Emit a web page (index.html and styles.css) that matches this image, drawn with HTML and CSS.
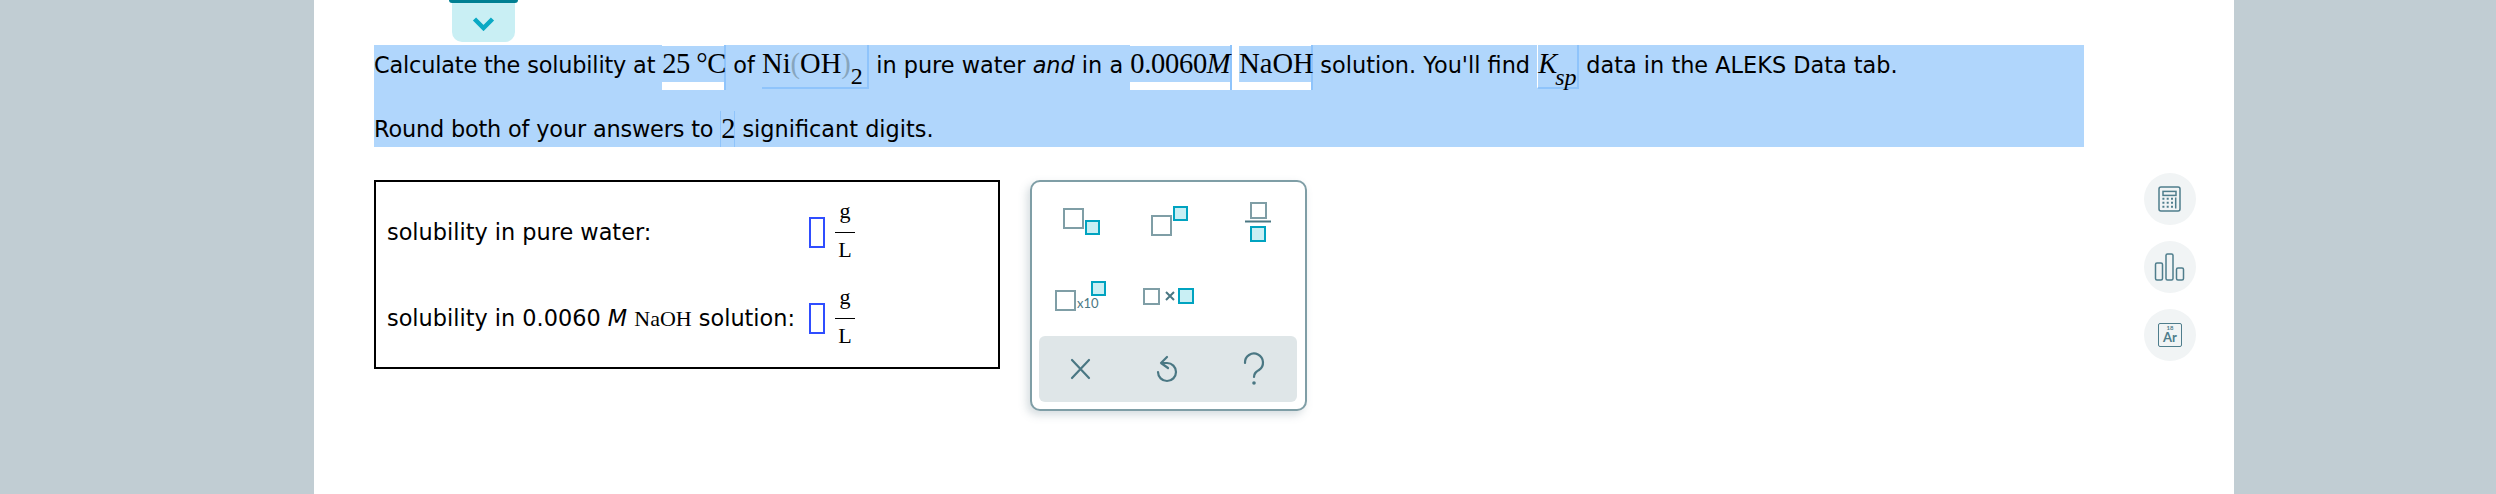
FILE: index.html
```html
<!DOCTYPE html>
<html lang="en">
<head>
  <meta charset="UTF-8">
  <title>Solubility question</title>
  <link rel="stylesheet" href="styles.css">
</head>
<body>
  <div class="side side-left"></div>

  <div class="main">
    <div class="content">
      <div class="tab-wrap">
        <div class="tab-bar"></div>
        <div class="tab">
          <svg width="23" height="14" viewBox="0 0 23 14"><path d="M2.500 2l9 9 9-9" fill="none" stroke="#0aa9c4" stroke-width="4.500"/></svg>
        </div>
      </div>

      <div class="question">
        <div class="q-line q-line-1">
          <span class="txt tight">Calculate the solubility at </span>
          <span class="tok tok-white tok-temp">25 °C</span>
          <span class="txt"> of </span>
          <span class="tok tok-hl tok-ni">Ni<span class="paren">(</span>OH<span class="paren">)</span><sub>2</sub></span>
          <span class="txt"> in pure water <em>and</em> in a </span>
          <span class="tok tok-white tok-conc">0.0060<i>M</i></span>
          <span class="tok-gap"></span>
          <span class="tok tok-white tok-naoh">NaOH</span>
          <span class="txt"> solution. You'll find </span>
          <span class="tok tok-hl tok-ksp"><i>K</i><sub><i>sp</i></sub></span>
          <span class="txt"> data in the ALEKS Data tab.</span>
        </div>
        <div class="q-line q-line-2">
          <span class="txt tight">Round both of your answers to </span>
          <span class="tok tok-two">2</span>
          <span class="txt"> significant digits.</span>
        </div>
      </div>

      <div class="work">
        <div class="answer-box">
          <div class="answer-row">
            <span class="answer-label">solubility in pure water:</span>
            <span class="input"></span>
            <span class="frac"><span class="num">g</span><span class="den">L</span></span>
          </div>
          <div class="answer-row">
            <span class="answer-label">solubility in 0.0060 <i>M</i> <span class="serif">NaOH</span> solution:</span>
            <span class="input"></span>
            <span class="frac"><span class="num">g</span><span class="den">L</span></span>
          </div>
        </div>

        <div class="palette">
          <div class="palette-grid">
            <svg width="86" height="74" viewBox="0 0 86 74" class="ic">
              <rect class="g" x="25" y="25" width="19" height="19"/><rect class="t" x="47" y="37" width="13" height="13"/>
            </svg>
            <svg width="86" height="74" viewBox="0 0 86 74" class="ic">
              <rect class="g" x="27" y="32" width="19" height="19"/><rect class="t" x="49" y="23" width="13" height="13"/>
            </svg>
            <svg width="86" height="74" viewBox="0 0 86 74" class="ic">
              <rect class="g" x="40" y="19" width="15" height="15"/><path class="ln" d="M34 37.500h26"/><rect class="t" x="40" y="43" width="14" height="14"/>
            </svg>
            <svg width="86" height="74" viewBox="0 0 86 74" class="ic">
              <rect class="g" x="17" y="33" width="19" height="19"/><text class="x10" x="38" y="50">x10</text><rect class="t" x="53" y="24" width="13" height="13"/>
            </svg>
            <svg width="86" height="74" viewBox="0 0 86 74" class="ic">
              <rect class="g" x="19" y="31" width="15" height="15"/><path class="ln2" d="M41 34l8 8M49 34l-8 8"/><rect class="t" x="54" y="31" width="14" height="14"/>
            </svg>
          </div>
          <div class="palette-bar">
            <svg width="86" height="66" viewBox="0 0 86 66"><path class="act" d="M33 24l17 18M50 24L33 42"/></svg>
            <svg width="86" height="66" viewBox="0 0 86 66"><path class="act" d="M42 21l-6 6 7 5M36 27h6a9 9 0 1 1-9 9"/></svg>
            <svg width="86" height="66" viewBox="0 0 86 66"><path class="act" d="M34 27a9 9 0 1 1 14 7c-3 2-5 3-5 7"/><circle cx="43" cy="47" r="1.800" fill="#4a7783"/></svg>
          </div>
        </div>
      </div>
    </div>

    <div class="tools">
      <div class="tool">
        <svg width="26" height="28" viewBox="0 0 26 28">
          <rect class="tl" x="2" y="2" width="21" height="24" rx="2"/>
          <rect class="tl" x="6" y="6.400" width="13" height="4"/>
          <path class="dots" d="M5.400 13.700h11M5.400 17.700h11M5.400 21.700h11"/>
          <path class="tl" d="M18.700 12.500v11"/>
        </svg>
      </div>
      <div class="tool">
        <svg width="32" height="30" viewBox="0 0 32 30">
          <rect class="tl" x="1.500" y="11" width="7" height="17" rx="1.500"/>
          <rect class="tl" x="12" y="2" width="7" height="26" rx="1.500"/>
          <rect class="tl" x="22.500" y="16" width="7" height="12" rx="1.500"/>
        </svg>
      </div>
      <div class="tool">
        <div class="element"><span class="el-num">18</span><span class="el-sym">Ar</span></div>
      </div>
    </div>
  </div>

  <div class="side side-right"></div>
</body>
</html>
```

FILE: styles.css
```css
html, body {
  margin: 0;
  height: 100%;
}

body {
  display: flex;
  height: 494px;
  overflow: hidden;
  background-color: #ffffff;
  color: #000000;
  font-family: "DejaVu Sans", sans-serif;
  font-size: 22.400px;
}

.side {
  background-color: #c1cdd3;
}

.side-left {
  width: 314px;
}

.side-right {
  width: 262px;
}

.main {
  width: 1920px;
  display: flex;
  padding-left: 60px;
  box-sizing: border-box;
}

.content {
  width: 1710px;
}

/* tab at the top */
.tab-wrap {
  width: 69px;
  margin-left: 75px;
}

.tab-bar {
  height: 3px;
  background-color: #007f92;
  border-radius: 0 0 3px 3px;
}

.tab {
  height: 39px;
  margin: 0 3px;
  background-color: #c9eff4;
  border-radius: 0 0 10px 10px;
  display: flex;
  justify-content: center;
  padding-top: 14px;
  box-sizing: border-box;
}

/* question text */
.question {
  margin-top: 3px;
  height: 102px;
  background-color: #b0d6fc;
}

.q-line {
  display: flex;
  align-items: flex-start;
  white-space: pre;
}

.q-line-1 {
  height: 66px;
}

.q-line-1 .txt {
  line-height: 40px;
}

.q-line-2 .txt {
  line-height: 36px;
}

.tight {
  letter-spacing: -0.17px;
}

.tok {
  font-family: "Liberation Serif", serif;
  font-size: 28.500px;
  line-height: 37px;
  box-sizing: border-box;
}

.tok-white {
  height: 45px;
  background: linear-gradient(#ffffff 1px, #b0d6fc 1px, #b0d6fc 37px, #ffffff 37px);
  border-right: 2px solid #8fc4fb;
}

.tok-gap {
  width: 7px;
  height: 45px;
  background-color: #ffffff;
}

.tok-hl {
  height: 44px;
  border-right: 2px solid #8fc4fb;
  border-bottom: 2px solid #8fc4fb;
}

.tok-temp {
  width: 64px;
  letter-spacing: -0.5px;
}

.tok-ni {
  width: 107px;
}

.tok-conc {
  width: 102px;
  letter-spacing: -0.3px;
}

.tok-naoh {
  width: 74px;
}

.tok-ksp {
  width: 42px;
  border-left: 1px solid #ffffff;
}

.tok sub {
  font-size: 24px;
  line-height: 0;
  vertical-align: -11px;
}

.tok-ksp sub {
  vertical-align: -12px;
  margin-left: -2px;
}

.paren {
  color: #87a5bd;
}

.tok-two {
  width: 15px;
  height: 36px;
  line-height: 36px;
  text-align: center;
  border-left: 1px solid #8fc4fb;
  border-right: 1px solid #8fc4fb;
}

/* answer box and palette */
.work {
  display: flex;
  align-items: flex-start;
  margin-top: 33px;
}

.answer-box {
  width: 626px;
  height: 189px;
  border: 2px solid #000000;
  box-sizing: border-box;
  padding: 0 11px;
}

.answer-row {
  height: 86px;
  display: flex;
  align-items: center;
}

.answer-row:first-child {
  margin-top: 7px;
}

.answer-label {
  width: 422px;
  white-space: nowrap;
}

.serif {
  font-family: "Liberation Serif", serif;
  font-size: 22px;
}

.input {
  width: 16px;
  height: 31px;
  border: 2px solid #2f4dff;
  box-sizing: border-box;
}

.frac {
  display: flex;
  flex-direction: column;
  align-items: center;
  width: 20px;
  margin-left: 10px;
  margin-top: -4px;
  font-family: "Liberation Serif", serif;
  font-size: 22px;
  line-height: 28px;
}

.num {
  width: 100%;
  text-align: center;
  border-bottom: 1px solid #000000;
  padding-bottom: 7px;
}

.den {
  padding-top: 3px;
}

.palette {
  width: 277px;
  height: 231px;
  margin-left: 30px;
  box-sizing: border-box;
  border: 2px solid #7f9ea6;
  border-radius: 10px;
  background-color: #ffffff;
  box-shadow: -3px 4px 8px rgba(90, 120, 130, 0.25);
  padding: 2px 7px;
}

.palette-grid {
  display: grid;
  grid-template-columns: repeat(3, 86px);
  grid-auto-rows: 74px;
  height: 148px;
}

.palette-bar {
  display: flex;
  margin-top: 4px;
  width: 258px;
  height: 66px;
  background-color: #dfe6e8;
  border-radius: 6px;
}

.ic .g {
  fill: #ffffff;
  stroke: #7f9ea6;
  stroke-width: 2;
}

.ic .t {
  fill: #c9eff4;
  stroke: #00a3c0;
  stroke-width: 2;
}

.ic .ln {
  stroke: #4a7783;
  stroke-width: 2;
}

.ic .ln2 {
  stroke: #4a7783;
  stroke-width: 2;
  fill: none;
}

.x10 {
  font-family: "Lato", sans-serif;
  font-size: 13px;
  fill: #4a7783;
}

.act {
  fill: none;
  stroke: #4a7783;
  stroke-width: 2.200;
  stroke-linecap: round;
  stroke-linejoin: round;
}

/* tool buttons on the right */
.tools {
  margin-left: 60px;
  margin-top: 173px;
  display: flex;
  flex-direction: column;
  gap: 16px;
}

.tool {
  width: 52px;
  height: 52px;
  border-radius: 50%;
  background-color: #f1f4f5;
  display: flex;
  align-items: center;
  justify-content: center;
}

.tl {
  fill: none;
  stroke: #4f7d8c;
  stroke-width: 1.500;
}

.dots {
  fill: none;
  stroke: #4f7d8c;
  stroke-width: 2;
  stroke-dasharray: 2 2.300;
}

.element {
  width: 24px;
  height: 24px;
  border: 1.500px solid #4f7d8c;
  border-radius: 2px;
  box-sizing: border-box;
  display: flex;
  flex-direction: column;
  align-items: center;
  color: #4f7d8c;
  font-family: "Lato", sans-serif;
  font-weight: bold;
  line-height: 1;
}

.el-num {
  font-size: 6px;
  margin-top: 1px;
}

.el-sym {
  font-size: 13px;
}
```
